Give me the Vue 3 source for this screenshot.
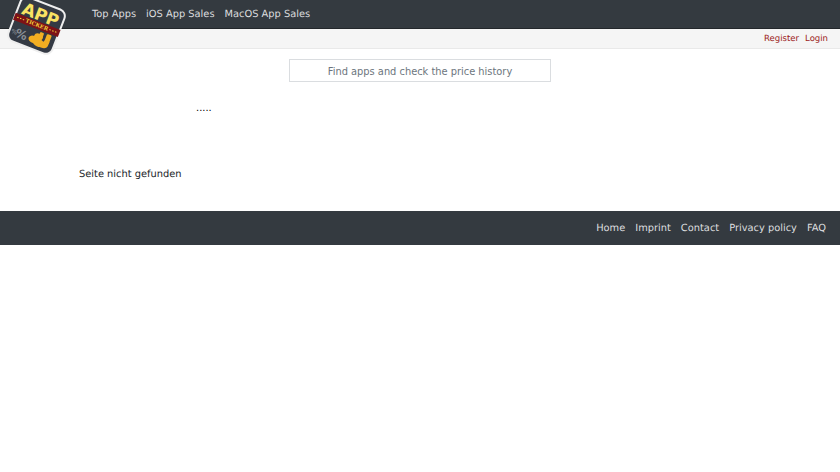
<template>
  <div class="page">
    <svg class="logo" width="72" height="60" viewBox="0 0 72 60">
      <g transform="translate(-1.5 -1.5) rotate(21 38 27)">
        <rect x="14.5" y="3.5" width="47" height="47" rx="7" fill="#343a44" stroke="#eeeeee" stroke-width="2" />
        <rect x="14" y="22.5" width="48" height="7.5" fill="#7d1216" />
        <text x="38" y="21.5" class="logo-app" text-anchor="middle">APP</text>
        <text x="38" y="28" class="logo-ticker" text-anchor="middle">TICKER</text>
        <path d="M17 26.2h1.5M20 26.2h1.5M23 26.2h1.5M51.5 26.2h1.5M54.5 26.2h1.5M57.5 26.2h1.5" stroke="#f5d43a" stroke-width="1" />
        <text x="27" y="45" class="logo-percent" text-anchor="middle">%</text>
        <text x="19.5" y="43" class="logo-percent-small" text-anchor="middle">%</text>
        <g fill="#f2ae22">
          <ellipse cx="40" cy="41" rx="5" ry="3.6" />
          <ellipse cx="44" cy="37" rx="4.5" ry="3.4" />
          <ellipse cx="46" cy="42.5" rx="6" ry="3.8" />
          <rect x="51" y="31" width="5" height="9" rx="1" />
          <path d="M51 38h5v3q0 5-6 5h-3z" />
          <rect x="44" y="31.5" width="4" height="5" rx="1" />
        </g>
      </g>
    </svg>

    <nav class="topbar">
      <a v-for="item in mainLinks" :key="item" class="top-link">{{ item }}</a>
    </nav>

    <div class="userbar">
      <a v-for="item in userLinks" :key="item" class="user-link">{{ item }}</a>
    </div>

    <div class="search-row">
      <input class="search" type="text" placeholder="Find apps and check the price history" />
    </div>

    <main class="content">
      <div class="dots">.....</div>
      <p class="message">Seite nicht gefunden</p>
    </main>

    <footer class="footer">
      <a v-for="item in footerLinks" :key="item" class="foot-link">{{ item }}</a>
    </footer>
  </div>
</template>

<script setup>
const mainLinks = ['Top Apps', 'iOS App Sales', 'MacOS App Sales']
const userLinks = ['Register', 'Login']
const footerLinks = ['Home', 'Imprint', 'Contact', 'Privacy policy', 'FAQ']
</script>

<style>
body {
  background: #fff;
}
</style>

<style scoped>
.page {
  position: relative;
  font-family: "DejaVu Sans", sans-serif;
  font-size: 9.85px;
  color: #212529;
  text-rendering: geometricPrecision;
}

.logo {
  position: absolute;
  top: 0;
  left: 0;
}

.logo-app {
  font-family: "DejaVu Sans", sans-serif;
  font-size: 17px;
  font-weight: 700;
  fill: #f9e363;
}

.logo-ticker {
  font-family: "DejaVu Serif", serif;
  font-size: 5.4px;
  font-weight: 700;
  fill: #f5d43a;
}

.logo-percent {
  font-family: "DejaVu Sans", sans-serif;
  font-size: 12px;
  font-weight: 700;
  fill: #8a8f96;
}

.logo-percent-small {
  font-family: "DejaVu Sans", sans-serif;
  font-size: 6px;
  font-weight: 700;
  fill: #7b8087;
}

.topbar {
  height: 28px;
  box-sizing: content-box;
  display: flex;
  align-items: center;
  gap: 10px;
  padding-left: 92px;
  background: #343a40;
  border-bottom: 1px solid #23272b;
}

.top-link {
  padding-top: 1px;
  color: #dcdddf;
}

.userbar {
  height: 19px;
  display: flex;
  align-items: center;
  justify-content: flex-end;
  gap: 6px;
  padding-right: 12px;
  background: #f5f5f5;
  border-bottom: 1px solid #e9e9e9;
  font-size: 8.5px;
}

.user-link {
  color: #9c1c22;
}

.search-row {
  display: flex;
  justify-content: center;
  padding-top: 10px;
}

.search {
  width: 262px;
  height: 23px;
  box-sizing: border-box;
  border: 1px solid #dadde0;
  background: #fff;
  padding: 1px 0 0;
  font-family: inherit;
  font-size: 9.85px;
  text-align: center;
  outline: none;
}

.search::placeholder {
  color: #6c757d;
  opacity: 1;
}

.content {
  height: 129px;
  padding-left: 79px;
}

.dots {
  padding: 20px 0 0 117px;
  line-height: 13px;
  color: #000;
}

.message {
  margin: 52px 0 0;
  line-height: 16px;
}

.footer {
  height: 34px;
  display: flex;
  align-items: center;
  justify-content: flex-end;
  gap: 10px;
  padding-right: 14px;
  background: #343a40;
}

.foot-link {
  color: #dcdddf;
}
</style>
